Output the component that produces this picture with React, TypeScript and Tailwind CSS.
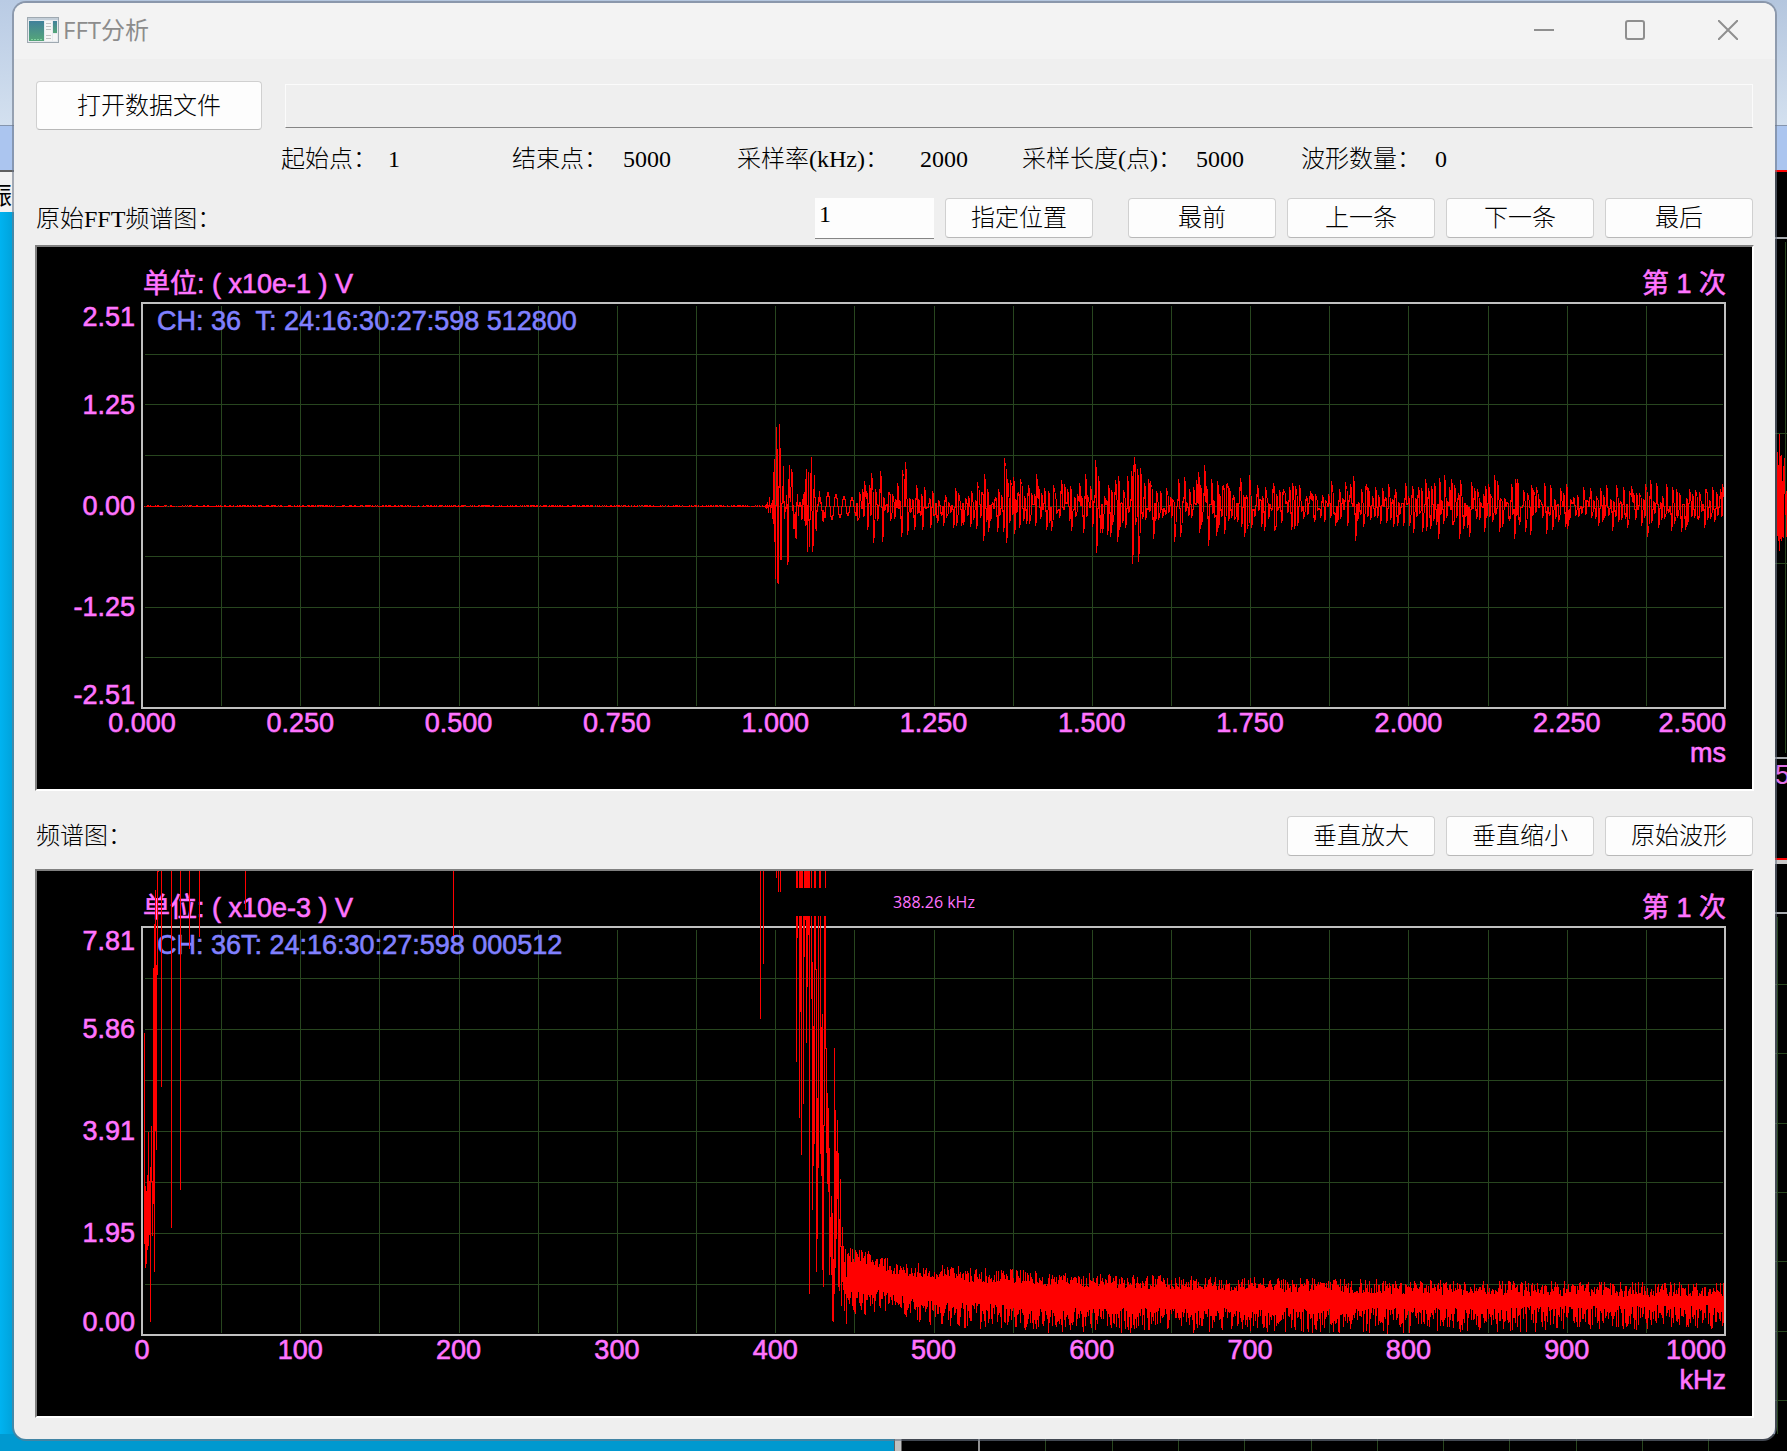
import React from 'react';

type Column = [x: number, top: number, bottom: number];

interface ChartProps {
    label: string;
    unit: string;
    caption: string;
    height: number;
    yLabels: { text: string; y: number }[];
    xLabels: string[];
    xUnit: string;
    trace: string;
    marker?: string;
}

const PLOT_WIDTH = 1583;
const X_STEPS = 20;
const Y_STEPS = 8;

// small deterministic generator, so the noise floor is the same on every render
function createRandom(seed: number) {
    let state = seed;
    return () => {
        state = (state * 1664525 + 1013904223) % 4294967296;
        return state / 4294967296;
    };
}

function toPath(columns: Column[], originX: number, originY: number) {
    return columns
        .map(([x, top, bottom]) => `M${x - originX + 0.5} ${top - originY}V${bottom - originY + 1}`)
        .join('');
}

function interpolate(points: [number, number][], x: number) {
    for (let i = 1; i < points.length; i++) {
        const [x0, y0] = points[i - 1];
        const [x1, y1] = points[i];
        if (x <= x1) return y0 + ((y1 - y0) * (x - x0)) / (x1 - x0);
    }
    return points[points.length - 1][1];
}

// first arrival of the burst, one entry per pixel column
const BURST: Column[] = [
    [765, 505, 507], [766, 504, 508], [767, 502, 507], [768, 505, 512], [769, 497, 506], [770, 505, 512],
    [771, 503, 507], [772, 500, 518], [773, 472, 523], [774, 459, 541], [775, 505, 578], [776, 427, 505],
    [777, 449, 582], [778, 486, 583], [779, 424, 487], [780, 448, 559], [781, 503, 559], [782, 486, 503],
    [783, 466, 502], [784, 501, 518], [785, 507, 511], [786, 495, 508], [787, 504, 564], [788, 479, 561],
    [789, 465, 497], [790, 487, 501], [791, 469, 486], [792, 472, 510], [793, 505, 528], [794, 514, 528],
    [795, 512, 537], [796, 502, 538], [797, 494, 505], [798, 505, 515], [799, 502, 506], [800, 502, 506],
    [801, 505, 519], [802, 499, 518], [803, 494, 504], [804, 492, 520], [805, 479, 525], [806, 469, 524],
    [807, 505, 551], [808, 472, 520], [809, 519, 546], [810, 473, 519], [811, 457, 510], [812, 511, 551],
    [813, 489, 545], [814, 475, 497], [815, 497, 528], [816, 510, 530], [817, 504, 511], [818, 497, 505],
    [819, 491, 501], [820, 497, 503], [821, 502, 510], [822, 510, 520], [823, 510, 521],
];

const PEAKS: [number, number][] = [
    [864, 481], [869, 485], [871, 473], [875, 489], [880, 471], [897, 483], [902, 470], [903, 474], [905, 462],
    [916, 485], [924, 487], [977, 482], [984, 474], [987, 489], [998, 489], [1004, 458], [1005, 463],
    [1007, 479], [1010, 480], [1013, 477], [1020, 479], [1036, 474], [1053, 485], [1064, 484], [1070, 486],
    [1079, 483], [1085, 474], [1090, 486], [1095, 460], [1098, 476], [1108, 485], [1115, 480], [1118, 476],
    [1131, 471], [1133, 465], [1134, 457], [1137, 469], [1140, 468], [1144, 483], [1148, 479], [1151, 486],
    [1178, 479], [1184, 477], [1196, 480], [1198, 472], [1204, 465], [1211, 479], [1217, 481], [1222, 486],
    [1227, 483], [1240, 478], [1249, 475], [1257, 485], [1265, 487], [1273, 483], [1284, 491], [1292, 483],
    [1295, 486], [1310, 491], [1331, 481], [1346, 488], [1350, 484], [1353, 476], [1366, 484], [1375, 487],
    [1412, 486], [1425, 479], [1439, 478], [1449, 487], [1460, 480], [1474, 488], [1485, 486], [1488, 484],
    [1497, 481], [1515, 479], [1531, 485], [1536, 487], [1550, 485], [1566, 484], [1600, 488], [1616, 485],
    [1623, 487], [1631, 486], [1645, 484], [1650, 480], [1666, 484], [1672, 487], [1689, 489], [1720, 489],
];

const TROUGHS: [number, number][] = [
    [867, 529], [873, 542], [882, 541], [901, 536], [907, 534], [914, 529], [922, 529], [943, 525],
    [956, 525], [961, 525], [976, 528], [983, 540], [988, 531], [997, 531], [1006, 542], [1014, 533],
    [1019, 527], [1035, 525], [1051, 530], [1071, 530], [1083, 532], [1096, 552], [1100, 532], [1107, 534],
    [1110, 536], [1117, 541], [1132, 563], [1133, 550], [1138, 561], [1139, 536], [1153, 538], [1174, 541],
    [1180, 536], [1199, 532], [1208, 545], [1216, 535], [1224, 533], [1244, 536], [1261, 526], [1275, 529],
    [1291, 529], [1294, 528], [1314, 521], [1335, 525], [1355, 540], [1393, 526], [1422, 531], [1430, 528],
    [1438, 538], [1449, 534], [1459, 538], [1467, 527], [1484, 531], [1488, 535], [1499, 531], [1514, 538],
    [1530, 534], [1546, 533], [1567, 528], [1612, 530], [1627, 527], [1647, 536], [1671, 530], [1685, 529],
];

const WAVE_LEVEL: [number, number][] = [
    [824, 15], [848, 9], [856, 9], [864, 16], [884, 15], [930, 13], [1000, 16], [1100, 16], [1145, 19],
    [1160, 13], [1220, 17], [1300, 14], [1320, 9], [1340, 15], [1440, 19], [1540, 17], [1580, 12], [1640, 17],
    [1724, 13],
];

function buildWave() {
    const random = createRandom(36);
    const columns: Column[] = [];
    for (let x = 144; x < 765; x++) {
        columns.push([x, random() > 0.5 ? 505 : 506, random() > 0.15 ? 506 : 505]);
    }
    columns.push(...BURST);

    const peaks = new Map(PEAKS);
    const troughs = new Map(TROUGHS);
    let last = 512;
    for (let x = 824; x < 1724; x++) {
        const level = interpolate(WAVE_LEVEL, x);
        const wave =
            x < 856
                ? -Math.cos(((x - 819) * Math.PI) / 4)
                : Math.sin(x * 1.9) * 0.8 + Math.sin(x * 1.13) * 0.4 + (random() - 0.5) * 1.2;
        const next = peaks.get(x) ?? troughs.get(x) ?? Math.round(506 + level * wave);
        columns.push([x, Math.min(last, next), Math.max(last, next)]);
        last = Math.round(506 + (next - 506) * (x < 856 ? 1 : 0.85));
    }
    return toPath(columns, 142, 303);
}

const SPECTRUM_LINES: Column[] = [
    [144, 1033, 1243], [145, 1186, 1267], [146, 1191, 1263], [147, 1175, 1249], [148, 1132, 1245],
    [149, 1181, 1234], [150, 1167, 1321], [151, 1126, 1181], [152, 1181, 1235], [153, 968, 1203],
    [154, 924, 1271], [155, 890, 1130], [156, 965, 1149], [157, 871, 974], [158, 871, 871], [161, 871, 1086],
    [171, 871, 1227], [180, 871, 1189], [189, 871, 948], [199, 871, 936], [245, 871, 909], [453, 871, 935],
    [760, 871, 1018], [763, 871, 963], [776, 871, 877], [778, 871, 891], [780, 871, 891], [796, 871, 1061],
    [797, 871, 937], [799, 871, 1117], [800, 871, 1011], [801, 871, 1154], [802, 871, 888], [803, 916, 1103],
    [804, 871, 956], [805, 871, 919], [806, 871, 1042], [807, 871, 986], [808, 871, 934], [809, 871, 1293],
    [811, 871, 998], [812, 962, 1209], [813, 1026, 1165], [814, 871, 1143], [815, 871, 969],
    [816, 969, 1271], [817, 1098, 1238], [818, 916, 1167], [819, 871, 888], [820, 871, 1153],
    [821, 1027, 1175], [822, 1014, 1269], [823, 1125, 1286], [824, 916, 1125], [825, 871, 1048],
    [826, 1048, 1152], [827, 1093, 1183], [828, 1108, 1191], [829, 1148, 1274], [830, 1217, 1256],
    [831, 1196, 1274], [832, 1213, 1320], [833, 1259, 1321], [834, 1048, 1293], [835, 1110, 1267],
    [836, 1151, 1238], [837, 1120, 1198], [838, 1153, 1286], [839, 1219, 1290], [840, 1179, 1246],
    [841, 1246, 1305], [842, 1227, 1281], [843, 1246, 1289], [844, 1262, 1310], [845, 1249, 1293],
    [846, 1277, 1323],
];

const FLOOR_TOP: [number, number][] = [
    [847, 1247], [870, 1250], [900, 1262], [940, 1265], [1040, 1271], [1200, 1276], [1500, 1281], [1724, 1282],
];

const FLOOR_BOTTOM: [number, number][] = [
    [847, 1317], [880, 1315], [920, 1325], [1000, 1329], [1040, 1333], [1400, 1333], [1724, 1329],
];

function buildSpectrum() {
    const random = createRandom(512);
    const columns: Column[] = [...SPECTRUM_LINES];
    for (let x = 847; x < 1724; x++) {
        const top = interpolate(FLOOR_TOP, x) + random() * 15;
        const bottom = interpolate(FLOOR_BOTTOM, x) - Math.pow(random(), 0.8) * 26;
        columns.push([x, Math.round(top), Math.round(bottom)]);
    }
    return toPath(columns, 142, 927);
}

function Chart({ label, unit, caption, height, yLabels, xLabels, xUnit, trace, marker }: ChartProps) {
    const viewHeight = height + 137;

    return (
        <div className="border-2 border-t-[#808080] border-l-[#808080] border-r-white border-b-white bg-black">
            <svg
                viewBox={`-105 -56 1715 ${viewHeight}`}
                role="img"
                aria-label={label}
                className="block h-auto w-full font-['Liberation_Sans','Noto_Sans_CJK_SC',sans-serif] text-[27px] font-normal"
            >
                <g stroke="#28461f" shapeRendering="crispEdges">
                    {Array.from({ length: X_STEPS - 1 }, (_, i) => {
                        const x = Math.round(((i + 1) * PLOT_WIDTH) / X_STEPS) + 0.5;
                        return <line key={i} x1={x} x2={x} y1={3} y2={height - 2} />;
                    })}
                    {Array.from({ length: Y_STEPS - 1 }, (_, i) => {
                        const y = Math.round(((i + 1) * height) / Y_STEPS) + 0.5;
                        return <line key={i} x1={3} x2={PLOT_WIDTH - 2} y1={y} y2={y} />;
                    })}
                </g>
                <rect width={PLOT_WIDTH} height={height} fill="none" stroke="#c0c0c0" strokeWidth={2} />

                <text
                    x={15}
                    y={27}
                    fill="#8080ff"
                    stroke="#8080ff"
                    strokeWidth={0.6}
                    xmlSpace="preserve"
                    className="whitespace-pre"
                >
                    {caption}
                </text>
                <g fill="#ff74ff" stroke="#ff74ff" strokeWidth={0.6}>
                    <text x={1} y={-10}>{unit}</text>
                    <text x={PLOT_WIDTH + 1} y={-10} textAnchor="end">第 1 次</text>
                    {yLabels.map(({ text, y }) => (
                        <text key={text} x={-7} y={y} textAnchor="end">{text}</text>
                    ))}
                    {xLabels.map((text, i) => {
                        const isLast = i === xLabels.length - 1;
                        return (
                            <text
                                key={text}
                                x={isLast ? PLOT_WIDTH + 1 : (i * PLOT_WIDTH) / (xLabels.length - 1)}
                                y={height + 24}
                                textAnchor={isLast ? 'end' : 'middle'}
                            >
                                {text}
                            </text>
                        );
                    })}
                    <text x={PLOT_WIDTH + 1} y={height + 54} textAnchor="end">{xUnit}</text>
                </g>

                <path d={trace} stroke="#ff0000" fill="none" shapeRendering="crispEdges" />

                {marker && (
                    <g>
                        <rect x={650} y={-39} width={283} height={28} fill="#000000" />
                        <text
                            x={792}
                            y={-19}
                            textAnchor="middle"
                            fill="#ff74ff"
                            className="font-['Open_Sans',sans-serif] text-[16px]"
                        >
                            {marker}
                        </text>
                    </g>
                )}
            </svg>
        </div>
    );
}

function ToolButton({ children, className = 'h-10 w-[148px]' }: { children: React.ReactNode; className?: string }) {
    return (
        <button
            type="button"
            className={`${className} shrink-0 rounded border border-[#d0d0d0] border-b-[#b8b8b8] bg-[#fdfdfd] text-2xl leading-8`}
        >
            {children}
        </button>
    );
}

const PARAMETERS = [
    { label: '起始点：', value: '1', item: 'w-[231px]', term: 'w-[107px]' },
    { label: '结束点：', value: '5000', item: 'w-[225px]', term: 'w-[111px]' },
    { label: '采样率(kHz)：', value: '2000', item: 'w-[285px]', term: 'w-[183px]' },
    { label: '采样长度(点)：', value: '5000', item: 'w-[279px]', term: 'w-[174px]' },
    { label: '波形数量：', value: '0', item: 'w-[231px]', term: 'w-[134px]' },
];

function AppIcon() {
    return (
        <svg width="32" height="26" viewBox="0 0 32 26" aria-hidden="true">
            <defs>
                <linearGradient id="app-icon" x1="0" y1="0" x2="0" y2="1">
                    <stop offset="0" stopColor="#41809a" />
                    <stop offset="1" stopColor="#55a678" />
                </linearGradient>
            </defs>
            <rect x="0.5" y="0.5" width="31" height="25" fill="#e6eaee" stroke="#9fa9b1" />
            <path d="M1 2H31" stroke="#c3ced8" strokeWidth="2" />
            <rect x="2" y="4" width="15" height="20" fill="url(#app-icon)" />
            <path d="M4 22.500H16" stroke="#7fd0a0" strokeDasharray="2 1" />
            <rect x="18" y="4" width="7" height="20" fill="#f6f6f6" />
            <path d="M19 6.500H24M19 9.500H24M19 12.500H24M19 18.500H24M19 21.500H24" stroke="#c2c2c2" />
            <rect x="26" y="4" width="4" height="12" fill="url(#app-icon)" />
            <rect x="26" y="17" width="4" height="7" fill="#f6f6f6" />
        </svg>
    );
}

function TitleBar() {
    return (
        <header className="rounded-t-xl bg-[#f3f3f3] pb-0.5">
            <div className="flex h-[54px] items-center pl-[13px]">
                <AppIcon />
                <h1 className="ml-1 flex-1 font-['Open_Sans','Noto_Sans_CJK_SC',sans-serif] text-2xl font-normal text-[#8c8c8c]">
                    FFT分析
                </h1>
                <div className="flex self-stretch text-[#8f8f8f]">
                    <button type="button" aria-label="最小化" className="flex w-[91px] items-center justify-center">
                        <svg width="20" height="20" viewBox="0 0 20 20" stroke="currentColor" strokeWidth="2">
                            <path d="M0 10H20" />
                        </svg>
                    </button>
                    <button type="button" aria-label="最大化" className="flex w-[92px] items-center justify-center">
                        <svg width="20" height="20" viewBox="0 0 20 20" fill="none" stroke="currentColor" strokeWidth="2">
                            <rect x="1" y="1" width="18" height="18" rx="2" />
                        </svg>
                    </button>
                    <button type="button" aria-label="关闭" className="flex w-[94px] items-center justify-center">
                        <svg width="20" height="20" viewBox="0 0 20 20" stroke="currentColor" strokeWidth="2">
                            <path d="M0 0L20 20M20 0L0 20" />
                        </svg>
                    </button>
                </div>
            </div>
        </header>
    );
}

// slivers of the main program that stick out around the dialog
function Backdrop() {
    return (
        <div aria-hidden="true" className="absolute inset-0 flex flex-col overflow-hidden">
            <div className="flex flex-1 justify-between bg-[#b4c6de]">
                <div className="flex w-5 flex-col">
                    <div className="h-[125px] bg-linear-to-b from-[#b9cbe4] to-[#d3e0ef]" />
                    <div className="h-[45px] border-t border-[#8595ad] bg-[#abc5ef]" />
                    <div className="flex h-[42px] justify-end border-t-2 border-[#606060] bg-[#f2f2f2] pr-2 font-['Noto_Sans_CJK_SC',sans-serif] text-2xl leading-[44px] text-black">
                        振
                    </div>
                    <div className="flex-1 bg-linear-to-r from-[#00b3f0] to-[#0099d0]" />
                </div>
                <div className="flex w-3 flex-col">
                    <div className="h-[125px] bg-linear-to-b from-[#b4c6de] to-[#d3e0ef]" />
                    <div className="h-[45px] border-t border-[#8595ad] bg-[#abc5ef]" />
                    <div className="h-[67px] border-t-2 border-[#ff0000] bg-black" />
                    <div className="h-[520px] border-t-2 border-[#a8abb0] bg-black">
                        <svg width="12" height="518" viewBox="0 0 12 518" fill="none" shapeRendering="crispEdges">
                            <path d="M0 194.500H12M0 324.500H12M10.500 3V514" stroke="#28461f" />
                            <path
                                d="M2.500 213V297M3.500 226V302M4.500 195V312M5.500 217V300M6.500 216V302M7.500 242V298M8.500 227V299M9.500 219V255M10.500 255V276M11.500 252V298"
                                stroke="#ff0000"
                            />
                        </svg>
                    </div>
                    <div className="h-[101px] overflow-hidden border-t-2 border-[#a8abb0] bg-black font-['Liberation_Sans',sans-serif] text-[27px] leading-8 text-[#e070e8]">
                        5
                    </div>
                    <div className="h-[54px] border-t-2 border-[#ff0000] bg-black">
                        <div className="h-1 bg-[#c8c8c8]" />
                    </div>
                    <div className="flex-1 border-t-2 border-[#a8abb0] bg-black">
                        <svg width="12" height="520" viewBox="0 0 12 520" stroke="#28461f" shapeRendering="crispEdges">
                            <path d="M2.500 3V520M0 70.500H12M0 139.500H12M0 209.500H12M0 278.500H12M0 347.500H12M0 417.500H12M0 486.500H12" />
                        </svg>
                    </div>
                </div>
            </div>
            <div className="flex h-5 bg-black">
                <div className="w-1/2 bg-[#0099d0]" />
                <div className="w-2 border-x border-[#606060] bg-[#c0c0c0]" />
                <div className="w-[78px] border-r-2 border-[#909090]" />
                <svg className="h-5 flex-1" stroke="#28461f" shapeRendering="crispEdges">
                    <path d="M65.500 0V20M132.500 0V20M198.500 0V20M264.500 0V20M331.500 0V20M397.500 0V20M463.500 0V20M529.500 0V20M596.500 0V20M662.500 0V20M728.500 0V20" />
                </svg>
            </div>
        </div>
    );
}

export default function App() {
    return (
        <div className="relative min-h-screen pt-[3px] pr-3 pb-3 pl-[14px]">
            <Backdrop />
            <main className="relative rounded-xl bg-[#efefef] pb-[21px] font-['Liberation_Serif','Noto_Sans_CJK_SC',serif] text-2xl leading-8 font-light text-black ring-2 ring-[#6e7888]/60">
                <TitleBar />

                <div className="px-[21px] pt-[22px]">
                    <div className="flex items-center gap-[23px] px-px">
                        <ToolButton className="h-[49px] w-[226px]">打开数据文件</ToolButton>
                        <input
                            type="text"
                            readOnly
                            aria-label="数据文件"
                            className="h-11 min-w-0 flex-1 border border-[#fbfbfb] border-b-[#858585] bg-transparent px-1 outline-none"
                        />
                    </div>

                    <dl className="mt-[13px] flex pl-[246px] whitespace-nowrap">
                        {PARAMETERS.map(({ label, value, item, term }) => (
                            <div key={label} className={`flex ${item}`}>
                                <dt className={term}>{label}</dt>
                                <dd>{value}</dd>
                            </div>
                        ))}
                    </dl>

                    <div className="mt-[23px] mb-1.5 flex items-start gap-[11px] px-px">
                        <h2 className="flex-1 self-center">原始FFT频谱图：</h2>
                        <input
                            type="text"
                            defaultValue="1"
                            aria-label="位置"
                            className="h-[41px] w-[119px] border-b border-[#858585] bg-[#fdfdfd] px-1 pb-2 outline-none"
                        />
                        <ToolButton>指定位置</ToolButton>
                        <div className="w-[13px]" />
                        <ToolButton>最前</ToolButton>
                        <ToolButton>上一条</ToolButton>
                        <ToolButton>下一条</ToolButton>
                        <ToolButton>最后</ToolButton>
                    </div>

                    <Chart
                        label="原始波形"
                        unit="单位: ( x10e-1 ) V"
                        caption="CH: 36  T: 24:16:30:27:598 512800"
                        height={405}
                        yLabels={[
                            { text: '2.51', y: 23 },
                            { text: '1.25', y: 111 },
                            { text: '0.00', y: 212 },
                            { text: '-1.25', y: 313 },
                            { text: '-2.51', y: 401 },
                        ]}
                        xLabels={['0.000', '0.250', '0.500', '0.750', '1.000', '1.250', '1.500', '1.750', '2.000', '2.250', '2.500']}
                        xUnit="ms"
                        trace={buildWave()}
                    />

                    <div className="mt-[25px] mb-[13px] flex items-center gap-[11px] px-px">
                        <h2 className="flex-1">频谱图：</h2>
                        <ToolButton>垂直放大</ToolButton>
                        <ToolButton>垂直缩小</ToolButton>
                        <ToolButton>原始波形</ToolButton>
                    </div>

                    <Chart
                        label="频谱图"
                        unit="单位: ( x10e-3 ) V"
                        caption="CH: 36T: 24:16:30:27:598 000512"
                        height={408}
                        yLabels={[
                            { text: '7.81', y: 23 },
                            { text: '5.86', y: 111 },
                            { text: '3.91', y: 213 },
                            { text: '1.95', y: 315 },
                            { text: '0.00', y: 404 },
                        ]}
                        xLabels={['0', '100', '200', '300', '400', '500', '600', '700', '800', '900', '1000']}
                        xUnit="kHz"
                        trace={buildSpectrum()}
                        marker="388.26 kHz"
                    />
                </div>
            </main>
        </div>
    );
}
